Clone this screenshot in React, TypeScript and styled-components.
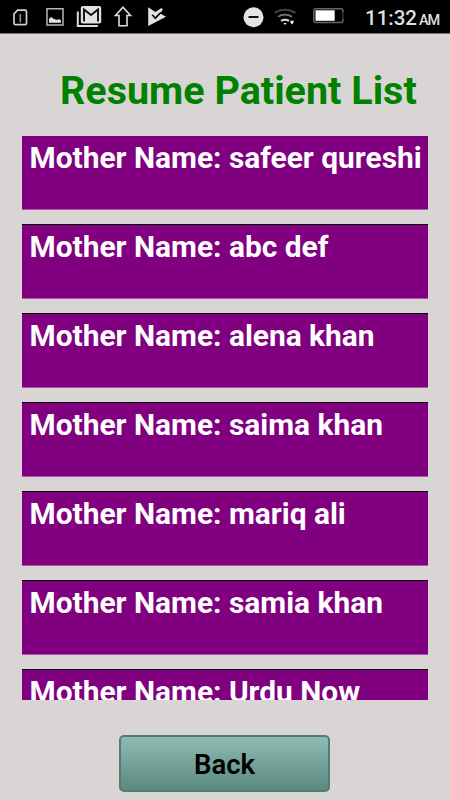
import React from 'react';
import styled, { createGlobalStyle } from 'styled-components';

const GlobalStyle = createGlobalStyle`
  * { box-sizing: border-box; }
  body { margin: 0; background: #d9d5d4; font-family: Roboto, sans-serif; }
`;

const Screen = styled.div`
  width: 450px;
  height: 800px;
  display: flex;
  flex-direction: column;
  background: #d9d5d4;
  overflow: hidden;
`;

const StatusBar = styled.header`
  flex: none;
  display: flex;
  justify-content: space-between;
  height: 34px;
  background: #000;
  border-bottom: 1px solid #777574;
`;

const StatusIcons = styled.svg<{ $width: number }>`
  display: block;
  width: ${(p) => p.$width}px;
  height: 33px;
`;

const StatusRight = styled.div`
  display: flex;
`;

const Clock = styled.div`
  width: 90px;
  padding-left: 5px;
  color: #dedede;
  font-size: 20.5px;
  font-weight: 500;
  line-height: 36px;
  white-space: nowrap;
`;

const Meridiem = styled.span`
  margin-left: 2px;
  font-size: 14.5px;
  letter-spacing: -1.2px;
`;

const Title = styled.h1`
  flex: none;
  height: 102px;
  margin: 0;
  padding: 33px 0 0 60px;
  color: #008200;
  font-size: 39.5px;
  font-weight: 700;
  line-height: 48px;
  white-space: nowrap;
`;

const List = styled.ul`
  flex: none;
  display: flex;
  flex-direction: column;
  gap: 14px;
  height: 564px;
  margin: 0 22px;
  padding: 0;
  overflow: hidden;
  list-style: none;
`;

const Row = styled.li`
  flex: none;
  height: 75px;
  padding: 4px 7px 0 7.5px;
  border-top: 1px solid #000;
  border-bottom: 1px solid #a857a6;
  background: #800080;
  color: #fff;
  font-size: 29.9px;
  font-weight: 700;
  line-height: 36px;
  white-space: nowrap;

  &:first-child {
    height: 74px;
    border-top: 0;
  }
`;

const Footer = styled.footer`
  display: flex;
  justify-content: center;
  padding: 35px 1px 0 0;
`;

const BackButton = styled.button`
  width: 211px;
  height: 57px;
  padding: 2px 0 0;
  border: 2px solid #597a73;
  border-radius: 5px;
  background: linear-gradient(#8ebbb3, #5b8980);
  color: #000;
  font-family: inherit;
  font-size: 27.5px;
  font-weight: 600;
`;

const patients = [
  'safeer qureshi',
  'abc def',
  'alena khan',
  'saima khan',
  'mariq ali',
  'samia khan',
  'Urdu Now',
];

export default function App() {
  return (
    <>
      <GlobalStyle />
      <Screen>
        <StatusBar>
          <StatusIcons $width={180} viewBox="0 0 180 33" fill="none">
            <path d="M17.5 10.2H25q1.5 0 1.500 1.500v11.500q0 1.500-1.500 1.500H15.500q-1.500 0-1.500-1.500V14Z" stroke="#cfcfcf" strokeWidth="1.700" />
            <path d="M20.300 14v8.500" stroke="#999" strokeWidth="1.500" />
            <path d="M47 8.800h16v16.200H47Z" stroke="#b5b5b5" strokeWidth="1.500" />
            <path d="M49 22.800V19l2-2 3 2 3 1 2-1 2 1.500v2.300Z" fill="#e4e4e4" />
            <path d="M77.800 11.500V26h20" stroke="#dcdcdc" strokeWidth="2" />
            <rect x="80.800" y="6" width="20.400" height="17.500" rx="2" fill="#e2e2e2" />
            <path d="M84 21.500V9.500l7 5.500 7-5.500v12" stroke="#101010" strokeWidth="1.900" />
            <path d="m123 7.300 7.500 8.200H127v10.300h-8V15.500h-3.500Z" stroke="#dedede" strokeWidth="1.600" />
            <path d="m148.200 7.300 7.300 4.700 5.800-4 1.500 1.500-2.500 4 5.700 3.300L148.200 26Z" fill="#e2e2e2" />
            <path d="m152.200 14.800 3.100 3.400 5.500-5.700" stroke="#000" strokeWidth="1.700" />
          </StatusIcons>
          <StatusRight>
            <StatusIcons $width={120} viewBox="240 0 120 33" fill="none">
              <circle cx="253.500" cy="17.200" r="10" fill="#e4e4e4" />
              <path d="M248.500 17h10" stroke="#111" strokeWidth="2" />
              <path d="M274.500 12.800q10.500-6.500 21 0" stroke="#4a4a4a" strokeWidth="1.800" />
              <path d="M278 16.800q7-4.300 14 0" stroke="#777" strokeWidth="1.800" />
              <path d="M281 20.800q4-2.300 8 0" stroke="#ddd" strokeWidth="2" />
              <path d="M283.500 23h3l-1.500 2Z" fill="#fff" />
              <path d="M290.500 20.800h3v1.700l-1.500 2-1.500-2Z" fill="#fff" />
              <rect x="313.800" y="8.700" width="29" height="13.700" rx="1.500" stroke="#666" strokeWidth="1.500" />
              <path d="M315.500 10.300h19.200v10.500h-19.200Z" fill="#fff" />
              <path d="M342.800 12.500v6" stroke="#222" strokeWidth="2" />
            </StatusIcons>
            <Clock>
              11:32<Meridiem>AM</Meridiem>
            </Clock>
          </StatusRight>
        </StatusBar>
        <Title>Resume Patient List</Title>
        <List>
          {patients.map((name) => (
            <Row key={name}>Mother Name: {name}</Row>
          ))}
        </List>
        <Footer>
          <BackButton type="button">Back</BackButton>
        </Footer>
      </Screen>
    </>
  );
}
